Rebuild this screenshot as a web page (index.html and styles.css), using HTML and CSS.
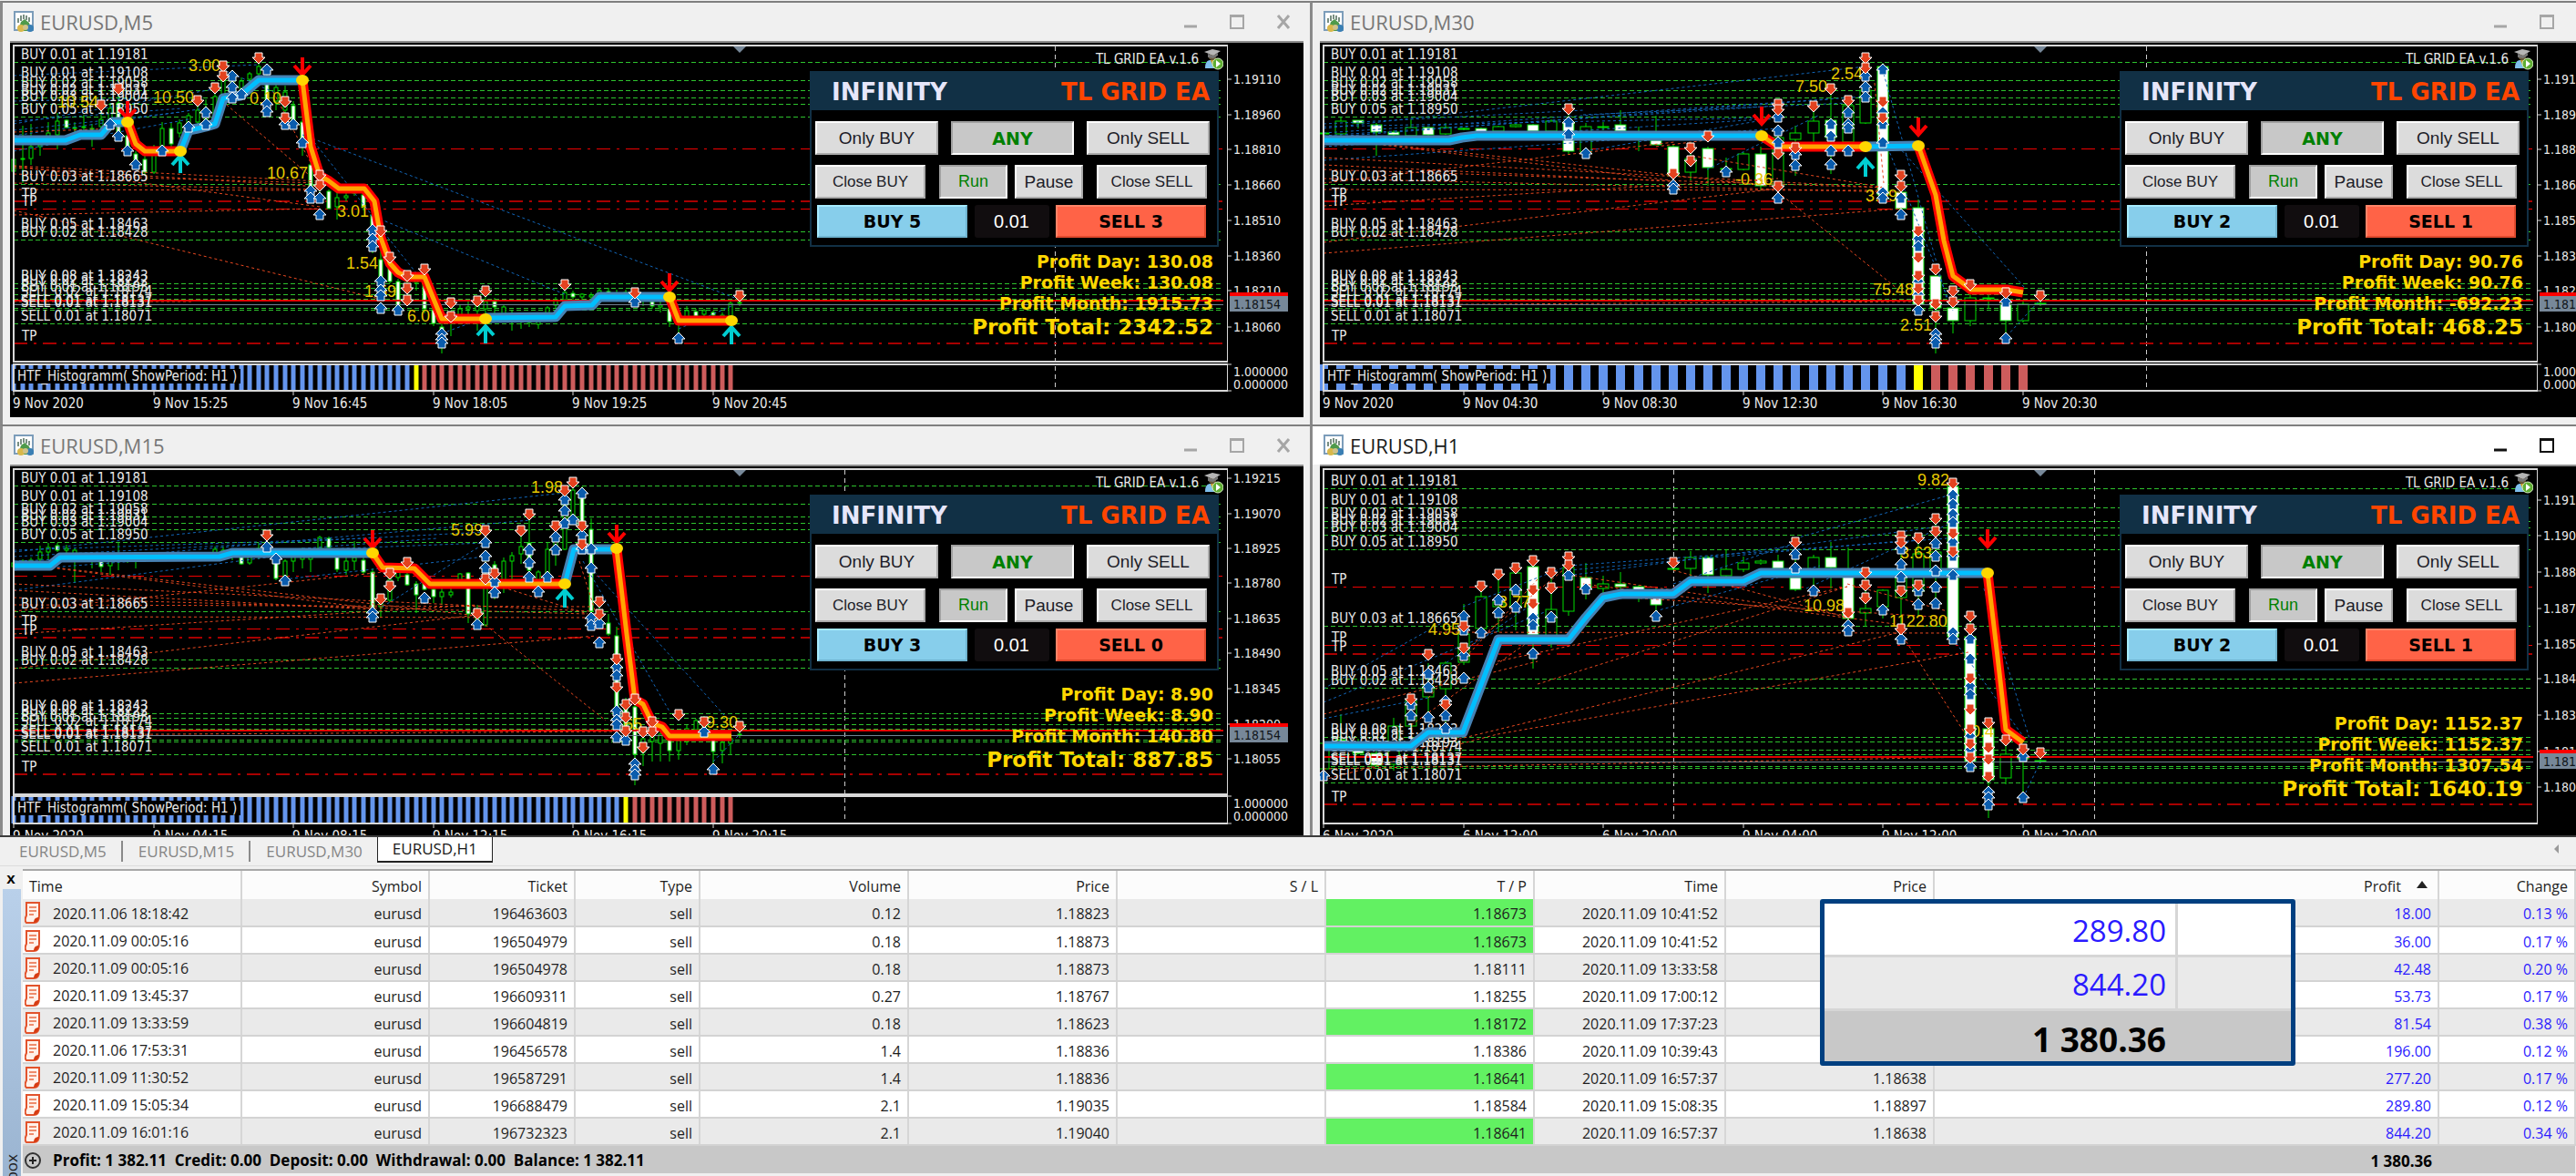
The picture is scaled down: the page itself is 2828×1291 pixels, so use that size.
FILE: index.html
```
<!DOCTYPE html>
<html lang="en">
<head>
<meta charset="utf-8">
<title>EURUSD workspace</title>
<link rel="stylesheet" href="styles.css">
</head>
<body>
<svg class="defs" aria-hidden="true">
  <symbol id="icon-chart" viewBox="0 0 24 24">
    <rect x="1" y="1" width="20" height="20" fill="#fff" stroke="#7c9dba" stroke-width="2"/>
    <path d="M5 13V8M8 11V5M11 9V4M14 10V5M17 12V7" stroke="#4d6b5a" stroke-width="1.5"/>
    <path d="M5 22l3-10 4-3 5 4 3 9z" fill="#4e9a4a"/>
    <circle cx="8" cy="19" r="4" fill="#d9b84a"/><circle cx="18" cy="19" r="4" fill="#3a7fb4"/><circle cx="13" cy="18" r="3" fill="#cfc38a"/>
  </symbol>
  <symbol id="icon-expert" viewBox="0 0 22 24">
    <path d="M2 22c0-8 3-9 7-9s7 2 7 9z" fill="#7fc0ee"/>
    <path d="M8 13l3 8 3-8z" fill="#c9961c"/>
    <circle cx="10" cy="9" r="4" fill="#6b5a3a"/>
    <path d="M1 4l9-3 9 2-8 5z" fill="#b5b5b5"/><path d="M5 6v4l6 1 5-3V5l-5 3z" fill="#777"/>
    <circle cx="16" cy="17" r="6" fill="#5fae33" stroke="#d8f0c4"/><path d="M14 13l5 4-5 4z" fill="#fff"/>
  </symbol>
  <symbol id="icon-order" viewBox="0 0 18 24">
    <path d="M2 1h14v14c0 5-2 8-6 8H2c-2-2-1-6 0-8z" fill="#fff1ea" stroke="#e2532c" stroke-width="2"/>
    <path d="M5 6h8M5 10h8M5 14h5" stroke="#ee8c6c" stroke-width="2"/>
    <path d="M10 23c0-4 2-6 6-6-1 4-3 6-6 6z" fill="#d63b12"/>
  </symbol>
  <symbol id="icon-min" viewBox="0 0 16 16"><path d="M1 13h14" stroke="currentColor" stroke-width="3"/></symbol>
  <symbol id="icon-max" viewBox="0 0 16 16"><path d="M1 1h14v14H1zM1 2h14" fill="none" stroke="currentColor" stroke-width="2"/></symbol>
  <symbol id="icon-close" viewBox="0 0 16 16"><path d="M2 1l12 14M14 1L2 15" stroke="currentColor" stroke-width="3"/></symbol>
</svg>

<main class="workspace">
  <section class="window">
    <header class="titlebar">
      <svg class="title-icon"><use href="#icon-chart"/></svg><h2>EURUSD,M5</h2>
      <button aria-label="Minimize"><svg><use href="#icon-min"/></svg></button>
      <button aria-label="Maximize"><svg><use href="#icon-max"/></svg></button>
      <button aria-label="Close"><svg><use href="#icon-close"/></svg></button>
    </header>
    <div class="chart">
      <svg class="plot" data-chart="m5"></svg>
      <svg class="axis" data-axis="m5"></svg>
      <div class="overlay">
        <div class="version"><span>TL GRID EA v.1.6</span><svg><use href="#icon-expert"/></svg></div>
        <div class="panel">
          <div class="panel-head"><span>INFINITY</span><span class="ea">TL GRID EA</span></div>
          <div class="panel-body">
            <div class="row modes"><button>Only BUY</button><button class="pressed strong">ANY</button><button>Only SELL</button></div>
            <div class="row actions"><button class="close">Close BUY</button><button class="pressed run">Run</button><button class="pause">Pause</button><button class="close">Close SELL</button></div>
            <div class="row trade"><button class="buy">BUY 5</button><input aria-label="Lot size" value="0.01"><button class="sell">SELL 3</button></div>
          </div>
        </div>
        <div class="profits"><p>Profit Day: 130.08</p><p>Profit Week: 130.08</p><p>Profit Month: 1915.73</p><p class="total">Profit Total: 2342.52</p></div>
      </div>
    </div>
  </section>

  <section class="window wide">
    <header class="titlebar">
      <svg class="title-icon"><use href="#icon-chart"/></svg><h2>EURUSD,M30</h2>
      <button aria-label="Minimize"><svg><use href="#icon-min"/></svg></button>
      <button aria-label="Maximize"><svg><use href="#icon-max"/></svg></button>
      <button aria-label="Close"><svg><use href="#icon-close"/></svg></button>
    </header>
    <div class="chart">
      <svg class="plot" data-chart="m30"></svg>
      <svg class="axis" data-axis="m30"></svg>
      <div class="overlay">
        <div class="version"><span>TL GRID EA v.1.6</span><svg><use href="#icon-expert"/></svg></div>
        <div class="panel">
          <div class="panel-head"><span>INFINITY</span><span class="ea">TL GRID EA</span></div>
          <div class="panel-body">
            <div class="row modes"><button>Only BUY</button><button class="pressed strong">ANY</button><button>Only SELL</button></div>
            <div class="row actions"><button class="close">Close BUY</button><button class="pressed run">Run</button><button class="pause">Pause</button><button class="close">Close SELL</button></div>
            <div class="row trade"><button class="buy">BUY 2</button><input aria-label="Lot size" value="0.01"><button class="sell">SELL 1</button></div>
          </div>
        </div>
        <div class="profits"><p>Profit Day: 90.76</p><p>Profit Week: 90.76</p><p>Profit Month: -692.23</p><p class="total">Profit Total: 468.25</p></div>
      </div>
    </div>
  </section>

  <section class="window">
    <header class="titlebar">
      <svg class="title-icon"><use href="#icon-chart"/></svg><h2>EURUSD,M15</h2>
      <button aria-label="Minimize"><svg><use href="#icon-min"/></svg></button>
      <button aria-label="Maximize"><svg><use href="#icon-max"/></svg></button>
      <button aria-label="Close"><svg><use href="#icon-close"/></svg></button>
    </header>
    <div class="chart">
      <svg class="plot tall" data-chart="m15"></svg>
      <svg class="axis tall" data-axis="m15"></svg>
      <div class="overlay">
        <div class="version"><span>TL GRID EA v.1.6</span><svg><use href="#icon-expert"/></svg></div>
        <div class="panel">
          <div class="panel-head"><span>INFINITY</span><span class="ea">TL GRID EA</span></div>
          <div class="panel-body">
            <div class="row modes"><button>Only BUY</button><button class="pressed strong">ANY</button><button>Only SELL</button></div>
            <div class="row actions"><button class="close">Close BUY</button><button class="pressed run">Run</button><button class="pause">Pause</button><button class="close">Close SELL</button></div>
            <div class="row trade"><button class="buy">BUY 3</button><input aria-label="Lot size" value="0.01"><button class="sell">SELL 0</button></div>
          </div>
        </div>
        <div class="profits"><p>Profit Day: 8.90</p><p>Profit Week: 8.90</p><p>Profit Month: 140.80</p><p class="total">Profit Total: 887.85</p></div>
      </div>
    </div>
  </section>

  <section class="window wide active">
    <header class="titlebar">
      <svg class="title-icon"><use href="#icon-chart"/></svg><h2>EURUSD,H1</h2>
      <button aria-label="Minimize"><svg><use href="#icon-min"/></svg></button>
      <button aria-label="Maximize"><svg><use href="#icon-max"/></svg></button>
      <button aria-label="Close"><svg><use href="#icon-close"/></svg></button>
    </header>
    <div class="chart single">
      <svg class="plot tall" data-chart="h1"></svg>
      <svg class="axis tall" data-axis="h1"></svg>
      <div class="overlay">
        <div class="version"><span>TL GRID EA v.1.6</span><svg><use href="#icon-expert"/></svg></div>
        <div class="panel">
          <div class="panel-head"><span>INFINITY</span><span class="ea">TL GRID EA</span></div>
          <div class="panel-body">
            <div class="row modes"><button>Only BUY</button><button class="pressed strong">ANY</button><button>Only SELL</button></div>
            <div class="row actions"><button class="close">Close BUY</button><button class="pressed run">Run</button><button class="pause">Pause</button><button class="close">Close SELL</button></div>
            <div class="row trade"><button class="buy">BUY 2</button><input aria-label="Lot size" value="0.01"><button class="sell">SELL 1</button></div>
          </div>
        </div>
        <div class="profits"><p>Profit Day: 1152.37</p><p>Profit Week: 1152.37</p><p>Profit Month: 1307.54</p><p class="total">Profit Total: 1640.19</p></div>
      </div>
    </div>
  </section>
</main>

<nav class="tabs">
  <a href="#m5">EURUSD,M5</a><a href="#m15">EURUSD,M15</a><a href="#m30">EURUSD,M30</a><a href="#h1" class="current">EURUSD,H1</a>
  <button class="scroll" aria-label="Scroll tabs left"></button>
</nav>

<section class="terminal">
  <aside class="dock"><button aria-label="Close toolbox">x</button><div class="dock-bar"><span>Toolbox</span></div></aside>
  <div class="history">
    <table>
      <colgroup><col class="c-open"><col class="c-symbol"><col class="c-ticket"><col class="c-type"><col class="c-price"><col class="c-price"><col class="c-price"><col class="c-price"><col class="c-time"><col class="c-price"><col><col class="c-change"></colgroup>
      <thead><tr><th class="first">Time</th><th>Symbol</th><th>Ticket</th><th>Type</th><th>Volume</th><th>Price</th><th>S / L</th><th>T / P</th><th>Time</th><th>Price</th><th>Profit<span class="sort"></span></th><th>Change</th></tr></thead>
      <tbody>
        <tr><td class="first"><svg><use href="#icon-order"/></svg>2020.11.06 18:18:42</td><td>eurusd</td><td>196463603</td><td>sell</td><td>0.12</td><td>1.18823</td><td></td><td class="hit">1.18673</td><td>2020.11.09 10:41:52</td><td></td><td class="gain">18.00</td><td class="gain">0.13 %</td></tr>
        <tr><td class="first"><svg><use href="#icon-order"/></svg>2020.11.09 00:05:16</td><td>eurusd</td><td>196504979</td><td>sell</td><td>0.18</td><td>1.18873</td><td></td><td class="hit">1.18673</td><td>2020.11.09 10:41:52</td><td></td><td class="gain">36.00</td><td class="gain">0.17 %</td></tr>
        <tr><td class="first"><svg><use href="#icon-order"/></svg>2020.11.09 00:05:16</td><td>eurusd</td><td>196504978</td><td>sell</td><td>0.18</td><td>1.18873</td><td></td><td>1.18111</td><td>2020.11.09 13:33:58</td><td></td><td class="gain">42.48</td><td class="gain">0.20 %</td></tr>
        <tr><td class="first"><svg><use href="#icon-order"/></svg>2020.11.09 13:45:37</td><td>eurusd</td><td>196609311</td><td>sell</td><td>0.27</td><td>1.18767</td><td></td><td>1.18255</td><td>2020.11.09 17:00:12</td><td></td><td class="gain">53.73</td><td class="gain">0.17 %</td></tr>
        <tr><td class="first"><svg><use href="#icon-order"/></svg>2020.11.09 13:33:59</td><td>eurusd</td><td>196604819</td><td>sell</td><td>0.18</td><td>1.18623</td><td></td><td class="hit">1.18172</td><td>2020.11.09 17:37:23</td><td></td><td class="gain">81.54</td><td class="gain">0.38 %</td></tr>
        <tr><td class="first"><svg><use href="#icon-order"/></svg>2020.11.06 17:53:31</td><td>eurusd</td><td>196456578</td><td>sell</td><td>1.4</td><td>1.18836</td><td></td><td>1.18386</td><td>2020.11.09 10:39:43</td><td></td><td class="gain">196.00</td><td class="gain">0.12 %</td></tr>
        <tr><td class="first"><svg><use href="#icon-order"/></svg>2020.11.09 11:30:52</td><td>eurusd</td><td>196587291</td><td>sell</td><td>1.4</td><td>1.18836</td><td></td><td class="hit">1.18641</td><td>2020.11.09 16:57:37</td><td>1.18638</td><td class="gain">277.20</td><td class="gain">0.17 %</td></tr>
        <tr><td class="first"><svg><use href="#icon-order"/></svg>2020.11.09 15:05:34</td><td>eurusd</td><td>196688479</td><td>sell</td><td>2.1</td><td>1.19035</td><td></td><td>1.18584</td><td>2020.11.09 15:08:35</td><td>1.18897</td><td class="gain">289.80</td><td class="gain">0.12 %</td></tr>
        <tr><td class="first"><svg><use href="#icon-order"/></svg>2020.11.09 16:01:16</td><td>eurusd</td><td>196732323</td><td>sell</td><td>2.1</td><td>1.19040</td><td></td><td class="hit">1.18641</td><td>2020.11.09 16:57:37</td><td>1.18638</td><td class="gain">844.20</td><td class="gain">0.34 %</td></tr>
      </tbody>
      <tfoot><tr><td class="first" colspan="10"><svg viewBox="0 0 18 18"><circle cx="9" cy="9" r="8" fill="none" stroke="#333" stroke-width="2"/><path d="M9 5v8M5 9h8" stroke="#222" stroke-width="2"/></svg>Profit: 1 382.11&nbsp; Credit: 0.00&nbsp; Deposit: 0.00&nbsp; Withdrawal: 0.00&nbsp; Balance: 1 382.11</td><td>1 380.36</td><td></td></tr></tfoot>
    </table>
    <div class="callout"><p><span>289.80</span></p><p class="alt"><span>844.20</span></p><p class="sum"><span>1 380.36</span></p></div>
  </div>
</section>
<script src="charts.js"></script>
</body>
</html>
```
FILE: styles.css
```
* { box-sizing: border-box; }
body { margin: 0; background: #f0f0f0; font-family: "Open Sans", "Noto Sans", sans-serif; font-size: 16px; color: #1e1e1e; overflow: hidden; }
h2, p { margin: 0; }
button, input { font: inherit; padding: 0; }
.defs { position: absolute; width: 0; height: 0; }

/* chart windows */
.workspace { display: grid; grid-template-columns: 1438fr 1390fr; grid-template-rows: 465px 451px; padding-top: 1px; overflow: hidden; border-bottom: 2px solid #3c3c3c; }
.window { border-top: 2px solid #7f7f7f; border-left: 3px solid #8a8a8a; padding: 0 7px 0 8px; background: #f0f0f0; overflow: hidden; min-width: 0; }
.window.wide { margin-right: -48px; }
.window.active .titlebar { background: #fff; color: #1a1a1a; }
.titlebar { display: flex; align-items: center; height: 42px; margin: 0 -7px 0 -8px; padding: 0 21px 1px 12px; color: #8a8a8a; }
.titlebar h2 { flex: 1; margin-left: 5px; font-size: 22px; font-weight: 400; line-height: 30px; color: #777; }
.active .titlebar h2 { color: #1a1a1a; }
.title-icon { width: 24px; height: 24px; }
.titlebar button { width: 16px; height: 16px; margin-left: 35px; border: 0; background: none; color: #a6a6a6; display: flex; }
.titlebar button svg { width: 16px; height: 16px; }
.active .titlebar button { color: #111; }
.chart { display: grid; grid-template-columns: 1fr 83px; background: #000; border-top: 2px solid #8c8c8c; }
.plot, .axis { display: block; width: 100%; height: 411px; grid-row: 1; }
.plot.tall, .axis.tall { height: 421px; }
.plot { grid-column: 1; }
.axis { grid-column: 2; }
.plot text, .axis text { font: 15px "DejaVu Sans Condensed", "DejaVu Sans", sans-serif; fill: #e8e8e8; }
.axis text { font-size: 14px; }
.axis text.now { fill: #10151a; }
.plot text.pips { font: 18px "Liberation Sans", sans-serif; fill: #e6c800; }
.plot .frame { width: calc(100% - 4px); fill: none; stroke: #d8d8d8; stroke-width: 2; }

.overlay { grid-column: 1; grid-row: 1; justify-self: end; z-index: 1; display: flex; flex-direction: column; align-items: flex-end; padding: 5px 10px 84px 0; }
.single .overlay { padding-bottom: 52px; }
.version { display: flex; align-items: center; gap: 5px; height: 26px; margin-right: -5px; font: 15px "DejaVu Sans Condensed", "DejaVu Sans", sans-serif; color: #e8e8e8; }
.version svg { width: 22px; height: 24px; }
.panel { width: 449px; border: 2px solid #113045; background: #000; }
.panel-head { display: flex; justify-content: space-between; align-items: center; height: 41px; padding: 0 8px 0 22px; background: #113045; font-family: "DejaVu Sans", sans-serif; font-weight: 700; font-size: 26px; color: #e6e6fa; }
.ea { color: #ff4500; }
.panel-body { display: flex; flex-direction: column; padding: 12px 8px 8px 4px; }
.row { display: flex; height: 37px; justify-content: space-between; font-family: "Liberation Sans", sans-serif; font-size: 19px; }
.actions { margin: 11px 3px 0 0; font-size: 18px; }
.trade { height: 36px; margin: 7px 4px 0 2px; }
.row button { border: 2px solid; border-color: #fff #aaa #aaa #fff; background: #dcdcdc; color: #1c1c28; white-space: nowrap; }
.row .pressed { background: #c8c8c8; border-color: #a0a0a0 #fff #fff #a0a0a0; color: #008000; }
.modes button { width: 135px; }
.row .strong, .row .buy, .row .sell { font-family: "DejaVu Sans", sans-serif; font-weight: 700; font-size: 19px; }
.row .close { width: 121px; font-size: 17px; }
.row .run, .row .pause { width: 75px; }
.row .run { margin: 0 -6px 0 0; }
.row .pause { margin-left: -1px; font-size: 19px; }
.trade .buy, .trade .sell { width: 165px; color: #000; }
.trade .buy { background: #87ceeb; border-color: #a6ecff #6fb4d0 #6fb4d0 #a6ecff; }
.trade .sell { background: #ff6347; border-color: #ff8468 #e04a2e #e04a2e #ff8468; }
.trade input { width: 82px; border: 0; border-radius: 3px; background: #110d0f; color: #fff; text-align: center; font-size: 20px; }
.profits { margin: auto 6px 0 0; text-align: right; font-family: "DejaVu Sans", sans-serif; font-weight: 700; font-size: 19px; line-height: 23px; color: #ffd700; }
.profits .total { font-size: 23px; line-height: 29px; }

/* window tabs */
.tabs { display: flex; height: 32px; padding-left: 4px; border-bottom: 1px solid #dcdcdc; font-size: 17px; }
.tabs a { padding: 1px 16px 0 17px; margin: 4px 0; line-height: 22px; border-right: 2px solid #8a8a8a; color: #858585; text-decoration: none; }
.tabs a:nth-child(3) { border: 0; }
.tabs .current { margin: 0 0 3px; line-height: 26px; padding: 0 16px; border: 1px solid #222; border-width: 0 1px 2px; background: #fff; color: #1a1a1a; }
.scroll { margin: 8px 19px 0 auto; width: 0; height: 10px; border: solid transparent; border-width: 5px 5px 5px 0; border-right-color: #999; background: none; }

/* trade history */
.terminal { display: flex; margin-top: 3px; height: 360px; }
.dock { width: 25px; padding-left: 3px; display: flex; flex-direction: column; }
.dock button { height: 22px; width: 18px; border: 0; background: none; font: bold 17px/14px "Liberation Sans", sans-serif; }
.dock-bar { width: 20px; flex: 1; background: linear-gradient(#b9d0ea, #98b2cf); display: flex; align-items: flex-end; overflow: hidden; }
.dock-bar span { writing-mode: vertical-rl; transform: rotate(180deg); line-height: 20px; font-size: 17px; margin-bottom: -17px; }
.history { position: relative; flex: 1; border-top: 2px solid #a8a8a8; }
table { width: 100%; table-layout: fixed; border-collapse: collapse; }
.c-open { width: 240px; } .c-symbol { width: 206px; } .c-ticket { width: 160px; } .c-type { width: 137px; }
.c-price { width: 229px; } .c-time { width: 210px; } .c-change { width: 150px; }
th, td { height: 30px; padding: 3px 7px 0; text-align: right; font-weight: 400; white-space: nowrap; border-right: 2px solid #d6d6d6; line-height: 22px; }
th { background: #fcfcfc; height: 31px; }
th.first { text-align: left; }
td { border-bottom: 2px solid #d3d3d3; background: #fff; }
tbody tr:nth-child(odd) td { background: #eaeaea; }
tbody td.hit, tbody tr:nth-child(odd) td.hit { background: #62f162; }
td.gain { color: #2a1aff; }
td.first { text-align: left; padding-left: 2px; }
td.first svg { width: 18px; height: 24px; margin: -4px 13px 0 0; vertical-align: middle; }
tfoot tr td { background: #c8c8c8; font-weight: 700; font-size: 17px; border: 0; color: #000; height: 31px; }
.sort { display: inline-block; margin: 0 4px 4px 17px; border: solid transparent; border-width: 0 6px 8px; border-bottom-color: #222; }
.callout { position: absolute; top: 31px; right: 308px; width: 522px; border: 5px solid #003f80; border-radius: 3px; font-size: 33px; color: #2a1aff; text-align: right; background: #fff; }
.callout p { height: 59px; line-height: 59px; padding-right: 124px; border-bottom: 3px solid #d6d6d6; }
.callout span { display: block; padding-right: 10px; border-right: 3px solid #d6d6d6; height: 58px; }
.callout .alt { background: #eaeaea; }
.callout .sum { background: #c8c8c8; color: #000; font-weight: 700; font-size: 37px; border: 0; height: 55px; line-height: 61px; }
.callout .sum span { border-color: transparent; height: 55px; }
```
FILE: charts.js
```
// Chart data. x/y are pixels inside a chart window; bars are addressed by index.
const LABELS = [
  'BUY 0.01 at 1.19181', 'BUY 0.01 at 1.19108', 'BUY 0.02 at 1.19058', 'BUY 0.02 at 1.19031',
  'BUY 0.03 at 1.19004', 'BUY 0.05 at 1.18950', 'BUY 0.03 at 1.18665', 'BUY 0.05 at 1.18463',
  'BUY 0.02 at 1.18428', 'BUY 0.08 at 1.18243', 'BUY 0.02 at 1.18222', 'BUY 0.01 at 1.18193',
  'SELL 0.02 at 1.18174', 'SELL 0.01 at 1.18137', 'SELL 0.01 at 1.18131', 'SELL 0.01 at 1.18071'
];
const CHARTS = {
  m5: {
    step: 9.6, bottom: 396, sub: [399, 428], marker: 812, sep: [1158], tickEvery: 16,
    times: ['9 Nov 2020', '9 Nov 15:25', '9 Nov 16:45', '9 Nov 18:05', '9 Nov 19:25', '9 Nov 20:45'],
    hist: [45, 46, 82], green: [67, 87, 98, 106, 113, 127, 201, 253, 262, 310, 315, 322, 327, 337, 339, 354],
    tp: [[162, 0, 0], [220, 1, 1], [228, 0, 1], [376, 1, 1]], ask: 329, bid: 333,
    axis: [['1.19110', 86], ['1.18960', 125], ['1.18810', 163], ['1.18660', 202], ['1.18510', 241], ['1.18360', 280], ['1.18210', 318], ['1.18060', 358]],
    candles: '0 167 193 174 187 0,1 137 200 173 174 0,2 135 180 160 173 0,3 150 170 158 160 0,4 133 157 145 155 0,5 123 163 132 147 0,6 130 140 131 139 1,7 133 150 139 140 0,8 125 145 138 139 0,9 135 160 140 141 0,10 118 143 130 138 0,11 112 133 118 130 0,12 103 147 112 145 1,13 145 165 148 163 1,14 165 182 168 181 1,15 170 192 174 188 1,16 158 190 167 188 0,17 133 167 140 163 0,18 133 167 140 157 1,19 130 150 134 145 0,20 123 138 126 135 0,21 113 140 120 133 0,22 108 135 118 130 0,23 97 133 105 125 0,24 75 110 85 104 0,25 78 100 85 98 0,26 84 102 88 96 0,27 78 87 80 86 0,28 67 85 72 80 0,29 80 123 85 110 1,30 90 120 95 110 0,31 93 125 100 120 0,32 110 135 115 132 1,33 130 170 133 153 1,34 172 215 180 213 1,35 190 218 195 205 1,36 207 228 209 228 1,37 205 240 216 226 0,38 210 220 214 216 0,39 206 214 209 211 0,40 207 230 213 226 1,41 227 277 235 267 1,42 275 312 284 308 1,43 290 310 292 308 1,44 305 338 308 336 1,45 300 312 303 308 0,46 300 318 303 309 0,47 300 343 309 338 1,48 333 357 339 354 1,49 353 387 358 370 1,50 340 368 344 352 0,51 333 352 338 346 0,52 330 345 336 338 0,53 330 362 334 340 0,54 325 345 330 338 0,55 326 345 330 336 1,56 333 352 336 345 0,57 340 362 345 352 0,58 343 360 346 350 0,59 345 358 350 353 0,60 345 360 348 355 0,61 335 350 337 343 0,62 325 338 328 334 0,63 312 330 320 328 0,64 318 328 321 325 1,65 321 328 322 325 0,66 320 328 323 325 0,67 315 327 318 324 0,68 315 325 319 322 1,69 317 330 321 326 0,70 317 328 320 326 0,71 318 330 321 325 1,72 320 335 322 326 0,73 325 338 330 335 1,74 330 342 334 336 0,75 335 358 338 352 1,76 345 368 347 352 0,77 335 350 340 347 0,78 338 349 341 346 1,79 338 348 340 344 0,80 340 348 342 345 1,81 342 350 345 348 0,82 328 350 332 348 0,83 330 335 331 332 0',
    ma: [['b', '15,153 72,153 88,147 111,147 123,133 140,133'], ['r', '140,133 149,157 159,165 198,165'], ['b', '198,165 207,142 217,140 226,138 236,135 245,107 264,104 284,87 332,87'], ['r', '332,87 341,160 351,192 360,197 372,206 400,206 411,220 418,260 428,288 437,298 447,303 466,303 485,349 533,349'], ['b', '533,348 610,347 620,335 650,334 658,325 735,325'], ['r', '735,325 745,351 803,351']],
    dots: [[140, 133], [198, 165], [332, 87], [533, 349], [735, 325], [803, 351]],
    sellBig: [[140, 110], [332, 62], [735, 299]], buyBig: [[198, 168], [533, 355], [803, 356]],
    down: '10 115,12 97,21 110,23 96,24 72,24 83,28 63,31 111,31 129,35 192,35 203,42 253,43 282,45 302,45 316,45 329,47 295,50 332,50 347,53 330,54 319,63 312,71 321,83 324',
    up: '11 135,12 148,13 164,14 179,17 164,20 138,22 122,22 135,25 82,25 94,25 106,26 102,29 75,29 113,29 121,31 135,32 135,33 155,34 208,34 216,35 216,35 234,41 251,41 261,41 269,42 307,42 317,42 323,42 337,44 339,49 365,49 371,49 375,71 330,76 370',
    pips: [['3.00', 207, 77], ['10.54', 63, 117], ['10.50', 168, 112], ['0.10', 274, 113], ['10.67', 293, 195], ['3.01', 370, 237], ['1.54', 380, 294], ['1.59', 400, 325], ['6.0', 447, 352]],
    blue: [[15, 82, 284, 70], [15, 110, 168, 107], [15, 135, 240, 96], [15, 148, 225, 118], [15, 165, 207, 130], [15, 142, 200, 122], [15, 132, 200, 118], [332, 147, 812, 328], [406, 235, 620, 322], [244, 75, 300, 100], [345, 155, 412, 240], [418, 250, 470, 315], [485, 365, 540, 345], [745, 360, 803, 335]],
    red: [[15, 181, 351, 198], [15, 183, 351, 204], [15, 190, 351, 200], [15, 200, 351, 207], [15, 207, 345, 208], [15, 235, 351, 228], [15, 181, 351, 226], [15, 230, 50, 238], [43, 236, 420, 328], [244, 110, 338, 190], [300, 100, 345, 185], [15, 144, 130, 140], [15, 330, 210, 330]]
  },
  m30: {
    step: 19.2, bottom: 396, sub: [399, 428], marker: 802, sep: [918], tickEvery: 8,
    times: ['9 Nov 2020', '9 Nov 04:30', '9 Nov 08:30', '9 Nov 12:30', '9 Nov 16:30', '9 Nov 20:30'],
    hist: [33, 34, 40], green: [67, 87, 98, 106, 113, 127, 201, 253, 262, 310, 315, 322, 327, 337, 339, 354],
    tp: [[162, 0, 0], [220, 1, 1], [228, 0, 1], [376, 1, 1]], ask: 329, bid: 333,
    axis: [['1.19110', 86], ['1.18960', 125], ['1.18810', 163], ['1.18660', 202], ['1.18510', 241], ['1.18360', 280], ['1.18210', 318], ['1.18060', 358]],
    candles: '0 145 147 145 146 0,1 128 158 132 146 0,2 131 140 131 134 1,3 134 170 136 144 1,4 142 149 144 147 1,5 130 149 139 148 0,6 139 148 139 147 1,7 134 147 139 146 0,8 139 142 140 141 0,9 139 146 140 144 1,10 137 145 138 143 0,11 134 139 136 138 0,12 135 144 136 143 1,13 130 147 132 143 0,14 118 168 133 165 1,15 134 167 138 166 0,16 133 142 138 139 0,17 120 145 136 143 1,18 138 165 146 148 0,19 126 158 153 158 1,20 158 200 160 192 1,21 155 197 173 188 0,22 160 203 162 183 1,23 172 192 184 185 0,24 166 186 168 185 0,25 160 208 168 203 1,26 148 208 150 202 0,27 137 192 145 152 0,28 122 155 132 145 0,29 100 190 131 150 1,30 107 163 115 155 0,31 67 135 98 134 0,32 68 218 72 213 1,33 200 233 210 228 1,34 218 343 227 333 1,35 302 387 302 337 1,36 333 365 337 351 1,37 318 357 326 351 0,38 323 338 326 327 0,39 320 370 333 351 1,40 330 353 333 351 0,41 329 335 332 333 0',
    ma: [['b', '15,153 153,153 167,150 183,148 496,148'], ['r', '496,148 514,160 610,160'], ['b', '610,160 668,159'], ['r', '668,159 687,213 696,263 706,302 721,313 726,317 765,317 783,320']],
    dots: [[496, 148], [610, 160], [668, 159]], sellBig: [[496, 116], [668, 128]], buyBig: [[610, 172]],
    down: '14 119,20 190,21 162,21 176,22 149,26 114,26 120,26 168,26 204,27 162,28 116,29 97,30 110,31 63,31 74,32 111,32 129,33 192,33 204,34 253,34 282,34 302,34 316,34 329,35 295,35 333,35 347,36 319,36 331,37 312,39 321,41 324',
    up: '14 133,14 146,15 167,20 202,20 206,23 187,26 127,26 142,26 155,26 216,27 168,27 180,29 135,29 148,29 164,29 179,30 122,30 135,30 139,30 164,31 82,31 94,31 105,32 75,32 122,32 135,32 155,32 210,32 216,33 216,33 234,34 261,34 269,34 308,34 322,34 339,35 365,35 371,35 375,39 330,39 370',
    pips: [['7.50', 533, 100], ['2.54', 572, 86], ['-0.36', 467, 202], ['3.09', 610, 220], ['75.48', 618, 323], ['2.51', 648, 362]],
    blue: [[15, 140, 610, 72], [15, 148, 514, 115], [15, 150, 570, 108], [15, 138, 514, 128], [15, 160, 496, 130], [15, 145, 610, 105], [15, 175, 514, 140], [15, 135, 300, 120], [300, 125, 590, 112], [302, 165, 514, 128], [436, 185, 560, 125], [646, 160, 785, 315], [630, 150, 706, 340], [630, 80, 700, 330], [765, 368, 800, 330]],
    red: [[15, 150, 396, 197], [15, 150, 514, 204], [15, 172, 632, 205], [15, 180, 396, 198], [15, 185, 632, 205], [15, 195, 650, 210], [15, 207, 632, 208], [15, 200, 400, 155], [15, 225, 514, 195], [15, 265, 514, 206], [15, 277, 650, 228], [514, 210, 650, 320], [15, 334, 680, 330], [420, 170, 632, 205], [620, 90, 630, 200], [380, 160, 496, 145]]
  },
  m15: {
    step: 9.6, bottom: 406, sub: [408, 438], marker: 812, sep: [927], tickEvery: 16,
    times: ['9 Nov 2020', '9 Nov 04:15', '9 Nov 08:15', '9 Nov 12:15', '9 Nov 16:15', '9 Nov 20:15'],
    hist: [69, 70, 82], green: [67, 87, 101, 108, 115, 129, 205, 258, 267, 317, 322, 329, 334, 346, 348, 362],
    tp: [[166, 0, 0], [224, 0, 1], [234, 1, 1], [384, 1, 1]], ask: 336, bid: 341,
    axis: [['1.19215', 59], ['1.19070', 98], ['1.18925', 136], ['1.18780', 174], ['1.18635', 213], ['1.18490', 251], ['1.18345', 290], ['1.18200', 329], ['1.18055', 367]],
    candles: '0 150 160 152 156 0,1 148 160 150 156 0,2 146 156 149 152 0,3 133 160 140 148 0,4 130 148 135 140 0,5 130 140 133 138 1,6 132 142 136 138 0,7 136 174 138 146 0,8 142 150 144 146 0,9 142 158 145 148 0,10 146 162 148 156 1,11 148 165 150 155 0,12 130 160 145 150 0,13 140 152 143 147 0,14 140 158 143 147 0,15 140 148 143 147 0,18 140 149 143 147 0,21 140 150 142 147 0,23 134 148 137 143 0,24 134 148 138 142 0,25 140 149 142 145 0,26 138 154 141 153 1,27 140 154 142 152 0,28 130 148 136 144 0,29 128 146 132 143 0,30 145 171 147 169 1,31 148 172 150 168 0,32 138 162 142 150 0,33 135 158 140 148 0,34 136 162 138 148 0,35 122 145 124 136 0,36 123 144 125 135 1,37 140 162 145 159 1,38 140 165 150 160 0,39 128 160 146 150 0,40 145 165 149 162 1,41 158 210 162 204 1,42 188 212 192 200 0,43 166 195 170 193 0,44 160 172 162 168 0,45 162 177 165 176 1,46 172 207 175 187 1,47 165 182 174 181 1,48 178 196 181 189 1,49 176 198 184 189 0,50 172 190 184 187 0,51 163 180 164 172 0,52 162 218 163 208 1,53 198 222 204 220 0,54 140 222 170 220 0,55 150 192 154 170 1,56 146 185 150 172 0,57 140 178 144 150 0,58 120 153 134 142 0,59 105 165 130 160 1,60 160 178 162 178 0,61 130 175 137 170 0,62 112 155 120 138 0,63 72 138 80 137 0,64 60 110 72 100 0,65 68 120 76 112 1,66 103 210 115 205 1,67 198 225 205 220 1,68 208 232 218 230 1,69 222 330 232 312 1,70 300 350 305 340 1,71 300 396 310 362 1,72 340 375 345 360 0,73 330 370 335 348 0,74 335 370 340 350 0,75 338 370 344 358 1,76 345 368 347 358 0,77 330 352 334 348 0,78 323 340 325 335 0,79 320 338 326 334 1,80 336 380 345 359 1,81 345 372 349 358 0,82 340 362 345 350 0,83 338 344 340 341 0',
    ma: [['b', '15,155 55,155 66,146 241,145 255,141 409,141'], ['r', '409,141 420,157 455,158 472,175 620,175'], ['b', '620,175 630,137 677,137'], ['r', '677,137 688,230 697,302 706,307 716,328 727,332 735,342 803,342']],
    dots: [[409, 141], [620, 175], [677, 136]], sellBig: [[409, 116], [677, 110]], buyBig: [[620, 180]],
    down: '29 122,42 192,43 164,43 178,45 152,53 208,54 117,54 170,55 164,58 117,59 99,62 112,63 73,64 64,65 112,65 132,67 195,67 209,69 258,69 289,70 308,70 322,70 337,71 302,72 338,72 355,73 327,73 338,76 319,79 327,83 332',
    up: '29 134,30 147,31 171,41 206,41 211,47 190,53 219,54 129,54 144,54 157,55 172,55 184,59 137,59 151,59 167,60 183,61 167,62 123,62 137,63 82,63 94,63 108,64 104,65 75,65 121,65 136,66 136,66 157,66 212,66 220,67 218,67 239,69 266,69 275,69 314,69 324,69 329,69 343,70 346,71 372,71 379,71 384,79 337,80 378',
    pips: [['1.98', 583, 75], ['5.99', 495, 122], ['65', 685, 335], ['9.30', 775, 333]],
    blue: [[15, 140, 620, 75], [15, 145, 533, 118], [15, 150, 533, 130], [15, 155, 582, 105], [15, 182, 300, 145], [15, 138, 400, 125], [15, 160, 480, 125], [312, 170, 533, 145], [420, 200, 533, 130], [648, 157, 796, 320], [640, 150, 735, 315], [783, 370, 812, 340]],
    red: [[15, 152, 409, 202], [15, 152, 524, 210], [15, 175, 648, 205], [15, 182, 409, 203], [15, 190, 645, 208], [15, 198, 648, 200], [15, 211, 660, 212], [15, 205, 440, 160], [15, 230, 524, 198], [15, 268, 533, 208], [15, 284, 655, 232], [533, 220, 665, 325], [15, 341, 690, 337], [524, 170, 645, 208], [636, 150, 655, 210]]
  },
  h1: {
    step: 19.2, bottom: 438, sub: null, marker: 802, sep: [399, 861], tickEvery: 8,
    times: ['6 Nov 2020', '6 Nov 12:00', '6 Nov 20:00', '9 Nov 04:00', '9 Nov 12:00', '9 Nov 20:00'],
    hist: null, green: [70, 91, 106, 113, 121, 137, 221, 279, 289, 343, 348, 357, 362, 375, 377, 393],
    tp: [[178, 0, 1], [242, 0, 1], [252, 1, 1], [417, 1, 1]], ask: 365, bid: 370,
    axis: [['1.19130', 83], ['1.19000', 122], ['1.18870', 162], ['1.18735', 202], ['1.18575', 241], ['1.18440', 279], ['1.18300', 319], ['1.18165', 359], ['1.18030', 398]],
    candles: '0 345 385 350 378 0,1 318 350 346 347 0,2 345 362 358 361 1,3 358 376 361 374 1,4 322 380 331 373 0,5 300 333 303 331 0,6 262 327 287 299 0,7 260 332 262 290 0,8 197 264 230 261 0,9 172 230 189 224 0,10 160 228 195 200 0,11 160 226 163 200 0,12 150 268 156 231 1,13 160 245 203 233 0,14 147 210 157 205 0,15 152 192 168 180 1,16 166 187 175 180 0,17 162 182 175 178 1,18 176 195 178 182 1,19 180 213 187 198 1,20 157 160 158 159 0,21 139 167 146 158 0,22 144 185 146 165 1,23 137 168 159 166 0,24 145 162 152 159 0,25 148 154 150 152 0,26 143 159 150 158 1,27 127 183 168 181 1,28 143 187 146 167 0,29 129 180 146 157 1,30 135 230 167 213 1,31 160 222 202 207 0,32 181 213 182 200 0,33 120 240 168 190 0,34 123 210 142 183 0,35 100 200 140 165 0,36 60 240 68 233 1,37 207 378 233 370 1,38 325 432 334 390 1,39 343 395 362 388 0,40 353 410 366 367 0,41 366 372 369 370 0',
    ma: [['b', '15,353 111,353 130,338 168,338 189,283 207,236 284,236 303,212 322,190 342,186 399,186 418,172 476,172 495,163 744,163'], ['r', '744,163 755,255 764,335 783,349']],
    dots: [[744, 163]], sellBig: [[744, 115]], buyBig: [],
    down: '5 302,6 253,7 308,8 222,8 246,9 178,10 165,11 158,12 150,12 182,12 197,13 163,13 180,14 146,14 155,20 152,27 130,30 207,31 163,31 177,31 191,33 123,33 130,33 183,33 225,34 125,34 177,35 104,35 118,36 65,36 120,36 140,37 211,37 225,37 279,37 313,37 335,37 351,37 366,38 328,38 355,38 368,38 387,39 347,40 357,41 361',
    up: '0 385,5 307,5 319,6 273,6 288,6 321,7 303,7 319,7 333,8 210,8 225,8 253,8 278,9 228,10 192,10 206,11 181,11 200,12 212,12 220,12 251,13 211,14 165,15 180,19 210,27 142,27 157,28 182,30 220,30 226,32 203,33 136,33 153,33 167,33 235,34 182,34 197,35 130,35 144,35 160,35 178,35 196,36 77,36 87,36 98,36 107,36 129,36 144,36 165,36 228,36 235,37 235,37 257,37 287,37 296,37 342,37 357,37 375,38 403,38 409,38 417,40 364,40 409',
    pips: [['9.82', 667, 67], ['3.63', 648, 147], ['10.98', 542, 205], ['1122.80', 636, 222], ['4.95', 130, 231], ['3.77', 207, 201], ['0.4', 726, 343]],
    blue: [[15, 290, 168, 205], [15, 305, 260, 205], [15, 323, 130, 300], [168, 200, 284, 155], [284, 155, 700, 125], [284, 160, 648, 128], [290, 165, 684, 113], [379, 205, 560, 155], [533, 125, 704, 77], [399, 175, 533, 130], [545, 180, 700, 110], [706, 235, 785, 345], [740, 180, 790, 345], [130, 275, 240, 200], [783, 410, 802, 370]],
    red: [[15, 318, 250, 260], [250, 285, 590, 178], [111, 358, 648, 228], [15, 390, 206, 340], [206, 340, 723, 250], [284, 165, 590, 210], [300, 175, 650, 220], [350, 190, 700, 212], [399, 160, 590, 212], [130, 228, 700, 229], [648, 228, 723, 345], [15, 378, 730, 365], [130, 300, 250, 170], [111, 330, 245, 235], [590, 175, 700, 205], [168, 250, 284, 155], [206, 260, 590, 178]]
  }
};

const NS = 'http://www.w3.org/2000/svg';
const OX = 11, OY = 46, AXIS_TEXT_X = 6;

function add(svg, tag, attrs, text) {
  const el = document.createElementNS(NS, tag);
  for (const k in attrs) el.setAttribute(k, attrs[k]);
  if (text) el.textContent = text;
  svg.append(el);
}
const pairs = s => s.split(',').map(p => p.split(' ').map(Number));

function drawPlot(svg, c) {
  const X = x => x - OX, Y = y => y - OY, bar = i => Math.round(X(15) + i * c.step);
  const hline = (y, color, dash, w) => add(svg, 'line', { x1: 4, x2: '99.6%', y1: Y(y), y2: Y(y), stroke: color, 'stroke-width': w || 1, 'stroke-dasharray': dash || 'none', 'shape-rendering': 'crispEdges' });
  const wide = c.step > 10, end = c.sub ? c.sub[1] : c.bottom;

  c.sep.forEach(x => add(svg, 'line', { x1: X(x), x2: X(x), y1: 4, y2: Y(end), stroke: '#ccc', 'stroke-width': 1, 'stroke-dasharray': '5 4', 'shape-rendering': 'crispEdges' }));
  c.green.forEach(y => hline(y, '#2dc22d', '5 3', 1));
  c.tp.forEach(t => hline(t[0], t[1] ? '#a80000' : '#f00000', '15 7 3 7', t[1] ? 2 : 1));
  pairs(c.candles).forEach(([i, wt, wb, bt, bb, full]) => {
    const w = wide ? 12 : 4, x = bar(i);
    add(svg, 'line', { x1: x, x2: x, y1: Y(wt), y2: Y(wb), stroke: '#0d0', 'stroke-width': 1 });
    add(svg, 'rect', { x: x - w / 2, y: Y(bt), width: w, height: Math.max(1, bb - bt), fill: full ? '#fff' : '#000', stroke: '#0d0' });
  });
  c.blue.forEach(([a, b, d, e]) => add(svg, 'line', { x1: X(a), y1: Y(b), x2: X(d), y2: Y(e), stroke: '#1266b8', 'stroke-dasharray': '3 3' }));
  c.red.forEach(([a, b, d, e]) => add(svg, 'line', { x1: X(a), y1: Y(b), x2: X(d), y2: Y(e), stroke: '#e84820', 'stroke-dasharray': '3 3' }));
  hline(c.ask, '#e00000', '', 2);
  hline(c.bid, '#708090', '', 1);

  c.green.forEach((y, i) => add(svg, 'text', { x: X(23), y: Y(y - 3) }, LABELS[i]));
  c.tp.forEach(t => t[2] && add(svg, 'text', { x: X(24), y: Y(t[0] - 3) }, 'TP'));

  c.ma.forEach(([kind, pts]) => {
    const points = pts.split(' ').map(p => p.split(',').map(Number)).map(p => X(p[0]) + ',' + Y(p[1])).join(' ');
    const [outer, inner] = kind === 'b' ? ['#4682b4', '#00bfff'] : ['#ff0000', '#ffa500'];
    add(svg, 'polyline', { points, fill: 'none', stroke: outer, 'stroke-width': 11, 'stroke-linejoin': 'round' });
    add(svg, 'polyline', { points, fill: 'none', stroke: inner, 'stroke-width': 5, 'stroke-linejoin': 'round' });
  });
  c.pips.forEach(([t, x, y]) => add(svg, 'text', { class: 'pips', x: X(x), y: Y(y) }, t));
  c.sellBig.forEach(([x, y]) => add(svg, 'path', { d: `M${X(x)} ${Y(y)}v19m-9-10l9 10 9-10`, fill: 'none', stroke: '#f00', 'stroke-width': 4 }));
  c.buyBig.forEach(([x, y]) => add(svg, 'path', { d: `M${X(x)} ${Y(y) + 21}v-19m-9 10l9-10 9 10`, fill: 'none', stroke: '#00ced1', 'stroke-width': 4 }));
  c.dots.forEach(([x, y]) => add(svg, 'ellipse', { cx: X(x), cy: Y(y), rx: 7, ry: 6, fill: '#ffd700' }));
  pairs(c.up).forEach(([i, y]) => add(svg, 'path', { d: `M${bar(i)} ${Y(y) - 6}l7 7h-3v5h-8v-5h-3z`, fill: '#0a5cad', stroke: '#fff' }));
  pairs(c.down).forEach(([i, y]) => add(svg, 'path', { d: `M${bar(i)} ${Y(y) + 6}l7-7h-3v-5h-8v5h-3z`, fill: '#e3421f', stroke: '#fff' }));
  add(svg, 'path', { d: `M${X(c.marker) - 7} 4h14l-7 7z`, fill: '#778899' });

  add(svg, 'rect', { class: 'frame', x: 4, y: 3, height: Y(c.bottom) - 3 });
  if (c.sub) {
    const [top, bottom] = c.sub, [lastBlue, yellow, lastRed] = c.hist, w = wide ? 10 : 5;
    for (let i = 0; i <= lastRed; i++) {
      add(svg, 'rect', { x: bar(i) - w / 2, y: Y(top), width: w, height: bottom - top, fill: i <= lastBlue ? '#6495ed' : i === yellow ? '#ffff00' : '#cd5c5c' });
    }
    add(svg, 'rect', { x: 4, y: Y(top) + 5, width: 249, height: 16, fill: '#000' });
    add(svg, 'text', { x: X(19), y: Y(top) + 18 }, 'HTF_Histogramm( ShowPeriod: H1 )');
    add(svg, 'rect', { class: 'frame', x: 4, y: Y(top), height: bottom - top });
  }
  c.times.forEach((t, k) => {
    const x = bar(k * c.tickEvery);
    add(svg, 'line', { x1: x, x2: x, y1: Y(end), y2: Y(end) + 5, stroke: '#ddd' });
    add(svg, 'text', { x: x - 1, y: Y(end) + 19 }, t);
  });
}

function drawAxis(svg, c) {
  const Y = y => y - OY;
  c.axis.forEach(([t, y]) => {
    add(svg, 'line', { x1: 0, x2: 4, y1: Y(y), y2: Y(y), stroke: '#ddd' });
    add(svg, 'text', { x: AXIS_TEXT_X, y: Y(y) + 5 }, t);
  });
  add(svg, 'rect', { x: 2, y: Y(c.bid) - 13, width: 64, height: 21, fill: '#ff0000' });
  add(svg, 'rect', { x: 2, y: Y(c.bid) - 9, width: 64, height: 17, fill: '#778899' });
  add(svg, 'text', { class: 'now', x: AXIS_TEXT_X, y: Y(c.bid) + 5 }, '1.18154');
  if (c.sub) {
    add(svg, 'path', { d: `M0 ${Y(c.sub[0])}h4M0 ${Y(c.sub[1])}h4`, stroke: '#ddd' });
    add(svg, 'text', { x: AXIS_TEXT_X, y: Y(c.sub[0]) + 13 }, '1.000000');
    add(svg, 'text', { x: AXIS_TEXT_X, y: Y(c.sub[0]) + 27 }, '0.000000');
  }
}

document.querySelectorAll('[data-chart]').forEach(el => drawPlot(el, CHARTS[el.dataset.chart]));
document.querySelectorAll('[data-axis]').forEach(el => drawAxis(el, CHARTS[el.dataset.axis]));
```
